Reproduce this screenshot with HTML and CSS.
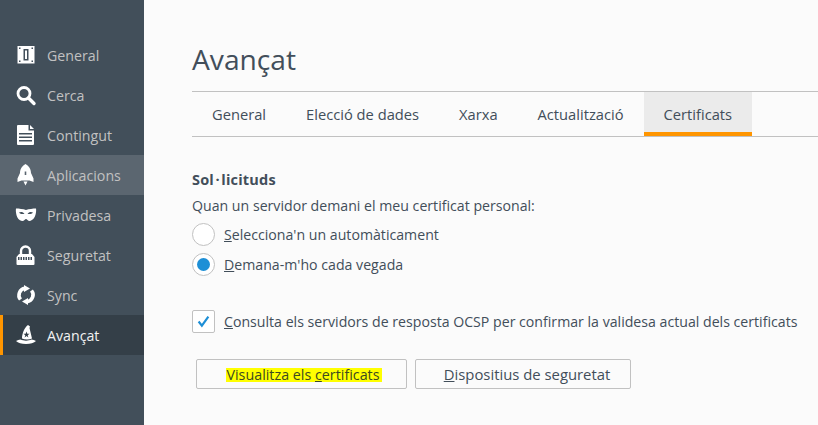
FILE: index.html
```html
<!DOCTYPE html>
<html lang="ca">
<head>
  <meta charset="UTF-8">
  <title>Avançat</title>
  <link rel="stylesheet" href="styles.css">
</head>
<body>
  <div class="sidebar">
    <div class="nav-item">
      <svg class="nav-icon" viewBox="0 0 20 20">
        <path fill-rule="evenodd" d="M1.500 1h17v17.500h-17zM7.500 4v11.500h5V4zM9 5.500h2v8.500H9z"/>
        <path class="cut" d="M3 2.500h1.500V4H3zM15.500 2.500H17V4h-1.500zM3 15.500h1.500V17H3zM15.500 15.500H17V17h-1.500z"/>
      </svg>
      <span>General</span>
    </div>
    <div class="nav-item">
      <svg class="nav-icon" viewBox="0 0 20 20"><circle cx="8" cy="8.500" r="6" fill="none" stroke="#fff" stroke-width="2.800"/><path d="M12.500 13l5.500 5.500" stroke="#fff" stroke-width="3.400" stroke-linecap="round"/></svg>
      <span>Cerca</span>
    </div>
    <div class="nav-item">
      <svg class="nav-icon" viewBox="0 0 20 20"><path fill-rule="evenodd" d="M2 0h10.500v5.500H18V19a1 1 0 0 1-1 1H2a1 1 0 0 1-1-1V1a1 1 0 0 1 1-1zM3 8v1.500h13V8zM3 11.500V13h13v-1.500zM3 15v1.500h13V15z"/><path d="M14 0l4 4h-4z"/></svg>
      <span>Contingut</span>
    </div>
    <div class="nav-item hovered">
      <svg class="nav-icon" viewBox="0 0 20 20">
        <path fill-rule="evenodd" d="M9.500-1C12.500.5 15 4 15 8l2.500 5.500V17l-4-1.500h-8L1.500 17v-3.500L4 8c0-4 2.500-7.500 5.500-9zM8.700 6.500v3.500h1.600V6.500z"/>
        <path d="M7.500 16.500h4l-2 4z"/>
      </svg>
      <span>Aplicacions</span>
    </div>
    <div class="nav-item">
      <svg class="nav-icon" viewBox="0 0 20 20"><path fill-rule="evenodd" d="M0 3.500c3 0 7 .5 10 1.500 3-1 7-1.500 10-1.500.5 2 0 11-6 12.500-2 .3-3-2-4-2s-2 2.300-4 2C0 15-.5 5.500 0 3.500zM3 7.500c1.500 1.800 4 2 5.500 1-1.500-1.800-4-2-5.500-1zM11.500 8.500c1.500 1 4 .8 5.500-1-1.500-1-4-.8-5.500 1z"/></svg>
      <span>Privadesa</span>
    </div>
    <div class="nav-item">
      <svg class="nav-icon" viewBox="0 0 20 20">
        <path d="M5 10V6a4.500 4.500 0 0 1 9 0v4" fill="none" stroke="#fff" stroke-width="2.400"/>
        <path d="M3 9h13l2.500 3v7a1 1 0 0 1-1 1h-16a1 1 0 0 1-1-1v-7z"/>
        <path class="hatch" d="M2 13.500h15" stroke-width="3" stroke-dasharray="1.500 1" fill="none"/>
      </svg>
      <span>Seguretat</span>
    </div>
    <div class="nav-item">
      <svg class="nav-icon" viewBox="0 0 20 20">
        <path d="M9 3.200A7 7 0 0 0 4.500 14.500" fill="none" stroke="#fff" stroke-width="3.600"/>
        <path d="M11 16.800A7 7 0 0 0 15.500 5.500" fill="none" stroke="#fff" stroke-width="3.600"/>
        <path d="M8 0l6 3.500-6 3.500zM12 20l-6-3.500 6-3.500z"/>
      </svg>
      <span>Sync</span>
    </div>
    <div class="nav-item active">
      <svg class="nav-icon" viewBox="0 0 20 20">
        <path fill-rule="evenodd" d="M12 0l2 1.500-.5 1.500L16 13.500c-3 1.300-7 1.300-10 0 0-5 2.500-11 6-13.500zM10.500 6.500l-.8 2.300H7.500l1.800 1.400-.7 2.300 1.900-1.400 1.900 1.400-.7-2.300 1.800-1.400h-2.200z"/>
        <path d="M0 16c1.500-1 3-1.500 4.500-1.500 3 1.500 8 1.500 11 0 1.500 0 3 .5 4.500 1.500-2 2-5.500 3-10 3S2 18 0 16z"/>
      </svg>
      <span>Avançat</span>
    </div>
  </div>

  <div class="main">
    <h1>Avançat</h1>
    <div class="tabs">
      <div class="tab">General</div>
      <div class="tab">Elecció de dades</div>
      <div class="tab">Xarxa</div>
      <div class="tab">Actualització</div>
      <div class="tab selected">Certificats</div>
    </div>

    <h2>Sol<span class="midpoint">·</span>licituds</h2>
    <p class="intro">Quan un servidor demani el meu certificat personal:</p>
    <div class="option first">
      <span class="radio"></span>
      <span><u>S</u>elecciona'n un automàticament</span>
    </div>
    <div class="option">
      <span class="radio checked"></span>
      <span><u>D</u>emana-m'ho cada vegada</span>
    </div>

    <div class="option ocsp">
      <span class="checkbox">
        <svg viewBox="0 0 12 12" width="13" height="13"><path d="M1.500 6l3 3.800L10.500 1.500" fill="none" stroke="#1d8fd6" stroke-width="2"/></svg>
      </span>
      <span><u>C</u>onsulta els servidors de resposta OCSP per confirmar la validesa actual dels certificats</span>
    </div>

    <div class="buttons">
      <button class="btn-view"><span class="marker">Visualitza els <u>c</u>ertificats</span></button>
      <button class="btn-devices"><u>D</u>ispositius de seguretat</button>
    </div>
  </div>
</body>
</html>
```

FILE: styles.css
```css
* {
  margin: 0;
  padding: 0;
  box-sizing: border-box;
}
html, body {
  height: 100%;
  overflow: hidden;
}
body {
  display: flex;
  font-family: "Open Sans", "Noto Sans", sans-serif;
  font-size: 14.150px;
  color: #424e5a;
  background: #fbfbfb;
}
.sidebar {
  width: 144px;
  flex-shrink: 0;
  padding-top: 35px;
  background: #424f5a;
}
.nav-item {
  display: flex;
  align-items: center;
  height: 40px;
  padding-left: 16px;
  color: #c1c1c1;
  font-size: 14.200px;
}
.nav-item.hovered {
  background: #5b6670;
}
.nav-item.active {
  background: #343f48;
  color: #f2f2f2;
  border-left: 3px solid #ff9500;
  padding-left: 13px;
}
.nav-icon {
  width: 20px;
  height: 20px;
  margin-right: 11px;
  fill: #fff;
  flex-shrink: 0;
  overflow: visible;
}
.nav-icon .cut {
  fill: #424f5a;
}
.nav-icon .hatch {
  stroke: #424f5a;
}
.main {
  flex: 1;
  padding-left: 48px;
  min-width: 0;
}
h1 {
  font-size: 28.200px;
  font-weight: 400;
  line-height: 38px;
  margin-top: 40px;
  margin-bottom: 13px;
}
.tabs {
  display: flex;
  height: 46px;
  border-top: 1px solid #c1c1c1;
  border-bottom: 1px solid #c1c1c1;
  font-size: 14.700px;
}
.tab {
  padding: 0 20px;
  line-height: 45px;
  white-space: nowrap;
}
.tab.selected {
  background: #ebebeb;
  border-bottom: 4px solid #ff9500;
  height: 44px;
}
h2 {
  font-size: 14.500px;
  font-weight: 700;
  letter-spacing: 0.2px;
  line-height: 20px;
  margin-top: 33px;
}
.midpoint {
  margin: 0 1.500px;
}
.intro {
  line-height: 20px;
  margin-top: 6px;
}
.option {
  display: flex;
  align-items: center;
  height: 30px;
  white-space: nowrap;
}
.option.first {
  margin-top: 3px;
}
.radio {
  width: 23px;
  height: 23px;
  margin-right: 9px;
  border: 1px solid #c1c1c1;
  border-radius: 50%;
  background: #fff;
  display: flex;
  align-items: center;
  justify-content: center;
}
.radio.checked::after {
  content: "";
  width: 13px;
  height: 13px;
  border-radius: 50%;
  background: #1d8fd6;
}
.ocsp {
  margin-top: 27px;
}
.checkbox {
  width: 23px;
  height: 23px;
  margin-right: 9px;
  border: 1px solid #c1c1c1;
  border-radius: 2px;
  background: #fff;
  display: flex;
  align-items: center;
  justify-content: center;
}
.buttons {
  display: flex;
  gap: 8px;
  margin-top: 23px;
  margin-left: 4px;
}
button {
  height: 30px;
  font-family: inherit;
  color: #424e5a;
  background: #fbfbfb;
  border: 1px solid #c1c1c1;
  border-radius: 2px;
}
.btn-view {
  width: 211px;
  padding-left: 5px;
  font-size: 14.300px;
}
.btn-devices {
  width: 216px;
  padding-left: 8px;
  font-size: 14.850px;
}
.marker {
  display: inline-block;
  line-height: 14px;
  padding-right: 2px;
  background: #ffff00;
  color: #3c4a20;
}
```
